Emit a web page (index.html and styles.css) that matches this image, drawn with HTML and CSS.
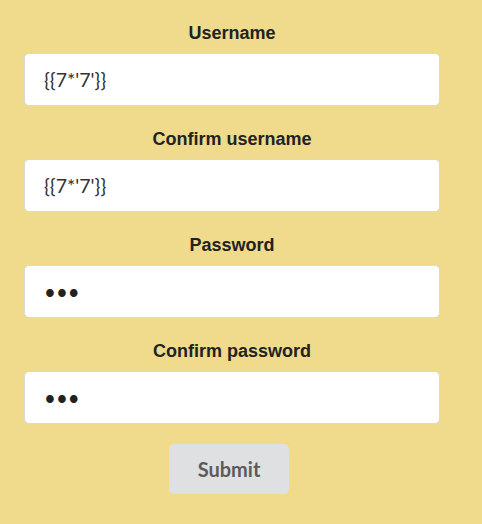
FILE: index.html
```html
<!DOCTYPE html>
<html lang="en">
<head>
    <meta charset="UTF-8">
    <meta name="viewport" content="width=device-width, initial-scale=1.0">
    <title>Register</title>
    <link rel="stylesheet" href="styles.css">
</head>
<body>

<form class="register-form" onsubmit="return false;">
    <div class="field">
        <label for="username">Username</label>
        <input type="text" id="username" value="{{7*'7'}}">
    </div>
    <div class="field">
        <label for="username2">Confirm username</label>
        <input type="text" id="username2" value="{{7*'7'}}">
    </div>
    <div class="field">
        <label for="password">Password</label>
        <input type="password" id="password" value="abc">
    </div>
    <div class="field">
        <label for="password2">Confirm password</label>
        <input type="password" id="password2" value="abc">
    </div>
    <button type="submit" class="submit-btn">Submit</button>
</form>

</body>
</html>
```

FILE: styles.css
```css
body {
    margin: 0;
    background-color: #efdb8b;
    font-family: "Liberation Sans", Arial, sans-serif;
}
.register-form {
    width: 416px;
    margin-left: 24px;
    padding-top: 20px;
    display: flex;
    flex-direction: column;
    align-items: center;
}
.field {
    width: 100%;
    margin-bottom: 20px;
    text-align: center;
}
.field label {
    display: block;
    font-size: 18px;
    font-weight: bold;
    line-height: 26px;
    color: #222;
    margin-bottom: 7px;
}
.field input {
    display: block;
    box-sizing: border-box;
    width: 100%;
    height: 53px;
    padding: 0 19px;
    border: 1px solid #d9d9d9;
    border-radius: 5px;
    background: #fff;
    font-family: Lato, sans-serif;
    font-size: 19.5px;
    color: #333;
    outline: none;
}
.field input[type="password"] {
    font-size: 20.5px;
    color: #222;
}
.submit-btn {
    width: 120px;
    height: 50px;
    margin-left: -6px;
    border: none;
    border-radius: 5px;
    background-color: #dfe0e2;
    color: #5b5b5b;
    font-family: Lato, sans-serif;
    font-weight: bold;
    font-size: 20px;
}
```
